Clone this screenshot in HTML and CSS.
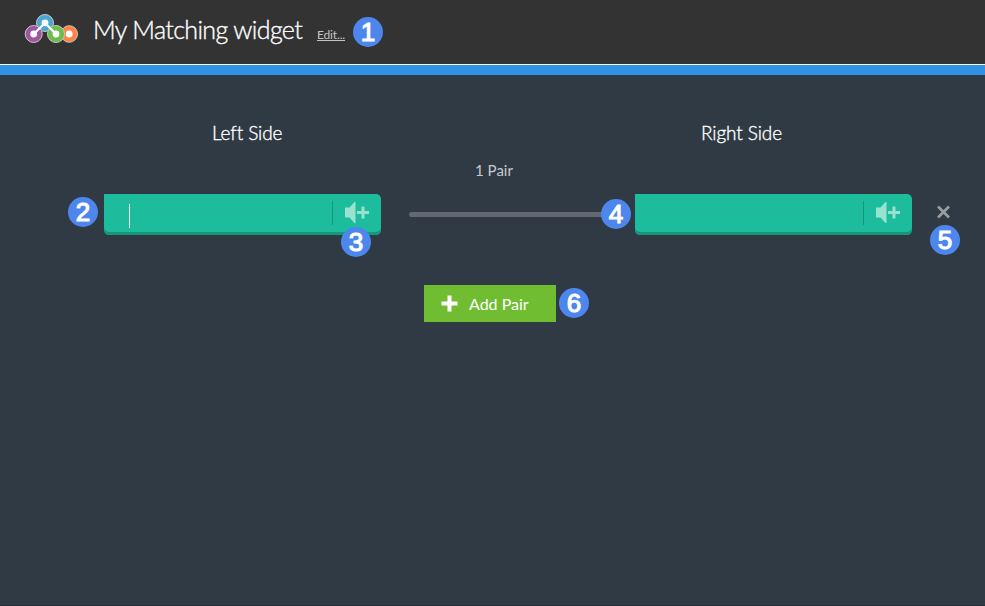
FILE: index.html
```
<!DOCTYPE html>
<html lang="en">
<head>
<meta charset="utf-8">
<title>My Matching widget</title>
<link rel="stylesheet" href="styles.css">
</head>
<body>
<header class="header">
  <svg class="logo" width="56" height="32" viewBox="0 0 56 32">
    <g stroke="#c9c5c3" stroke-width="1">
      <circle cx="45.200" cy="21" r="8.300" fill="#ff8345"/>
      <circle cx="21" cy="10" r="8.500" fill="#4ba5d5"/>
      <circle cx="9.700" cy="21" r="8.500" fill="#a055a0"/>
      <circle cx="32" cy="21" r="8.500" fill="#6bbd4c"/>
    </g>
    <path d="M9.700 21 21 10 32 21" fill="none" stroke="#fff" stroke-width="2.300"/>
    <g fill="#fff"><circle cx="9.700" cy="21" r="3.400"/><circle cx="21" cy="9.800" r="3.400"/><circle cx="32" cy="21" r="3.400"/><circle cx="45.200" cy="21" r="3.400"/></g>
  </svg>
  <h1 class="title">My Matching widget</h1>
  <a class="edit">Edit...</a>
  <span class="badge badge-header">1</span>
</header>
<main class="board">
  <div class="headings">
    <h2 class="heading">Left Side</h2>
    <h2 class="heading">Right Side</h2>
  </div>
  <div class="count">1 Pair</div>
  <div class="pair">
    <div class="field">
      <span class="badge badge-left">2</span>
      <span class="caret"></span>
      <span class="audio">
        <svg width="25" height="22" viewBox="0 0 25 22" fill="#99e2d0"><path d="M0 5.500H4.500L9.500 0H10.500V21H9.500L4.500 15.500H0Z"/><path d="M16.500 4.500H19.500V9H24V12H19.500V16.500H16.500V12H12V9H16.500Z"/></svg>
      </span>
      <span class="badge badge-audio">3</span>
    </div>
    <div class="connector"></div>
    <div class="field">
      <span class="badge badge-right">4</span>
      <span class="audio">
        <svg width="25" height="22" viewBox="0 0 25 22" fill="#99e2d0"><path d="M0 5.500H4.500L9.500 0H10.500V21H9.500L4.500 15.500H0Z"/><path d="M16.500 4.500H19.500V9H24V12H19.500V16.500H16.500V12H12V9H16.500Z"/></svg>
      </span>
    </div>
    <div class="remove">
      <svg width="15" height="14" viewBox="0 0 15 14"><path d="M2 1.500 13 12.500M13 1.500 2 12.500" stroke="#989da1" stroke-width="2.700"/></svg>
      <span class="badge badge-remove">5</span>
    </div>
  </div>
  <div class="actions">
    <div class="add">
      <svg width="17" height="17" viewBox="0 0 17 17"><path d="M8.500 0.500V16.500M0.500 8.500H16.500" stroke="#fff" stroke-width="4"/></svg>
      <span class="add-label">Add Pair</span>
    </div>
    <span class="badge">6</span>
  </div>
</main>
</body>
</html>
```
FILE: styles.css
```
* { box-sizing: border-box; }
body {
  margin: 0;
  height: 606px;
  overflow: hidden;
  display: flex;
  flex-direction: column;
  background: #303a44;
  color: #fff;
  font-family: Lato, sans-serif;
}
h1, h2 { margin: 0; font-weight: 300; white-space: nowrap; -webkit-text-stroke: 0.35px #fff; }
svg { display: block; flex: none; }
.header {
  height: 75px;
  flex: none;
  display: flex;
  align-items: flex-start;
  padding: 13px 0 0 24px;
  background: #333;
  border-bottom: 10px solid #3092e3;
  box-shadow: inset 0 -1px #fff;
}
.title {
  width: 210px;
  margin: -1px 0 0 13px;
  font-size: 25px;
  line-height: 34px;
  letter-spacing: -0.62px;
}
.edit {
  width: 28px;
  margin: 13px 0 0 14px;
  font-size: 12px;
  line-height: 18px;
  letter-spacing: -0.15px;
  color: #c4c4c4;
  text-decoration: underline;
  white-space: nowrap;
}
.badge {
  width: 30px;
  height: 30px;
  flex: none;
  border-radius: 50%;
  background: #4d87ed;
  color: #fff;
  font: 26px/30px "Liberation Sans", sans-serif;
  -webkit-text-stroke: 1.1px #fff;
  text-align: center;
}
.badge-header { margin: 4px 0 0 8px; }
.board {
  flex: 1;
  border-bottom: 1px solid #282c35;
}
.headings {
  display: flex;
  justify-content: space-between;
  padding: 45px 203px 0 212px;
}
.heading { font-size: 19px; line-height: 26px; letter-spacing: -0.1px; }
.count {
  margin: 14px 0 0 3px;
  text-align: center;
  font-size: 15px;
  line-height: 21px;
  color: #c6cacd;
}
.pair {
  display: flex;
  padding-left: 104px;
  margin-top: 13px;
  height: 41px;
}
.field {
  position: relative;
  width: 277px;
  display: flex;
  background: #1dbc9c;
  border-radius: 0 5px 5px 5px;
  box-shadow: inset 0 -3px #18967d;
}
.caret { width: 1px; height: 24px; margin: 10px 0 0 25px; background: #fff; }
.audio {
  height: 24px;
  margin: 7px 11px 0 auto;
  padding: 1px 0 0 12px;
  border-left: 1px solid #16967f;
}
.connector {
  width: 198px;
  height: 5px;
  margin: 18px 28px 0;
  border-radius: 3px 0 0 3px;
  background: #626871;
}
.badge-left { position: absolute; left: -36px; top: 3px; }
.badge-audio { position: absolute; left: 237px; top: 33px; }
.badge-right { position: absolute; left: -34px; top: 5px; }
.remove { position: relative; margin: 11px 0 0 24px; height: 14px; }
.badge-remove { position: absolute; left: -6px; top: 20px; }
.actions { display: flex; gap: 3px; padding-left: 424px; margin-top: 50px; }
.actions .badge { margin-top: 3px; }
.add {
  width: 132px;
  height: 37px;
  display: flex;
  align-items: center;
  padding-left: 17px;
  gap: 11px;
  background: #70bd32;
  font-size: 16px;
  line-height: 20px;
}
.add-label { white-space: nowrap; }
```
